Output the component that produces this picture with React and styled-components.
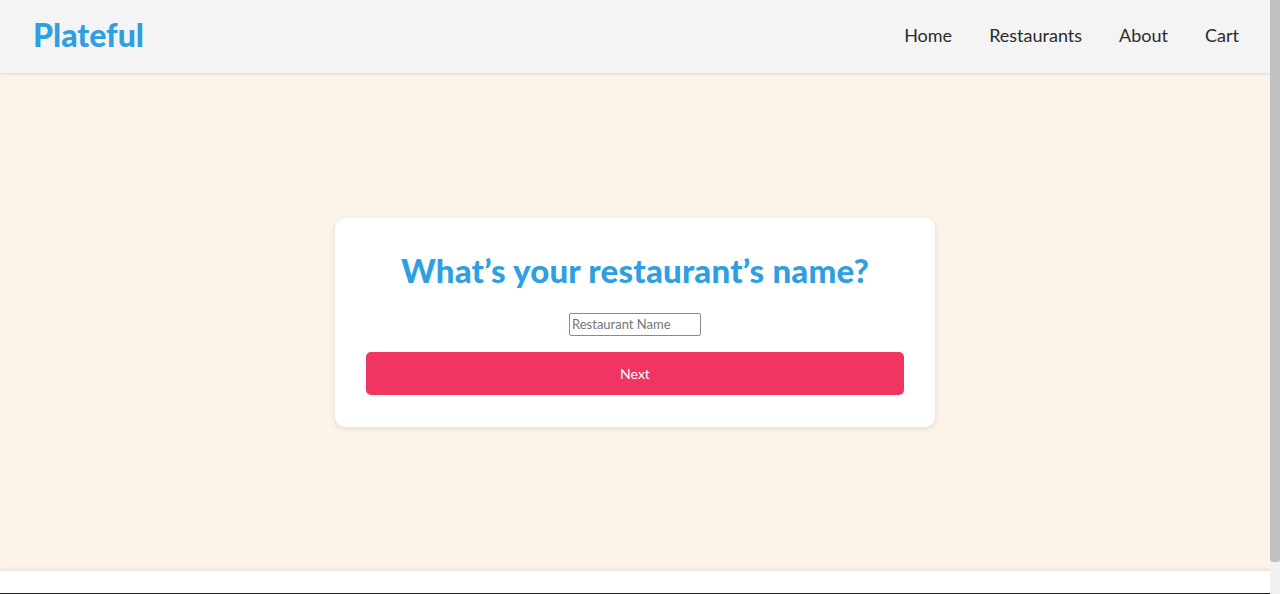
import React, {useState} from 'react'
import styled, {createGlobalStyle} from 'styled-components'

const GlobalStyle = createGlobalStyle`
    html, body {
        margin: 0;
        padding: 0;
        font-family: 'Lato', 'Noto Sans', sans-serif;
        background-color: #ffffff;
    }
`

const Page = styled.div`
    display: flex;
    flex-direction: column;
    min-height: 100vh;
    margin-right: 10px;
`

const ScrollTrack = styled.div`
    position: fixed;
    top: 0;
    right: 0;
    width: 10px;
    height: 100vh;
    background-color: #f1f1f1;
    z-index: 10;
`

const ScrollThumb = styled.div`
    width: 100%;
    border-radius: 0 0 3px 3px;
    background-color: #c1c1c1;
`

const NavBar = styled.nav`
    height: 73px;
    display: flex;
    align-items: center;
    justify-content: space-between;
    padding: 0 31px 0 33px;
    background-color: #f4f4f4;
    box-shadow: 0 1px 3px rgba(0, 0, 0, 0.12);
    position: relative;
    z-index: 2;
`

const Logo = styled.div`
    font-size: 32px;
    font-weight: 900;
    color: #2e9fe2;
    margin-top: -4px;
`

const NavList = styled.ul`
    display: flex;
    gap: 37px;
    margin: 0;
    padding: 0;
    list-style: none;
`

const NavItem = styled.li`
    font-size: 18px;
    color: #2b2b2b;
    margin-top: -4px;
    cursor: pointer;
`

const Main = styled.main`
    height: 498px;
    display: flex;
    align-items: center;
    justify-content: center;
    background-color: #fcf4e8;
`

const Card = styled.div`
    width: 600px;
    box-sizing: border-box;
    padding: 32px 31px;
    display: flex;
    flex-direction: column;
    align-items: center;
    background-color: #ffffff;
    border-radius: 10px;
    box-shadow: 0 2px 6px rgba(0, 0, 0, 0.1);
`

const Title = styled.h1`
    margin: 0 0 22px;
    font-size: 33px;
    line-height: 41px;
    font-weight: 900;
    color: #2e9fe2;
    letter-spacing: 0.2px;
`

const NameInput = styled.input`
    width: 132px;
    height: 23px;
    box-sizing: border-box;
    padding: 1px 2px;
    border: 1px solid #8a8a8a;
    border-radius: 2px;
    font-family: 'Lato', 'Noto Sans', sans-serif;
    font-size: 13px;
    color: #333;
    &::placeholder {
        color: #767676;
    }
`

const NextButton = styled.button`
    width: 100%;
    height: 43px;
    margin-top: 16px;
    border: none;
    border-radius: 5px;
    background-color: #f03562;
    color: #ffffff;
    font-family: 'Lato', 'Noto Sans', sans-serif;
    font-size: 14px;
    cursor: pointer;
`

const Footer = styled.footer`
    padding-top: 22px;
    background-color: #ffffff;
    box-shadow: 0 -2px 4px rgba(0, 0, 0, 0.08);
    position: relative;
`

const FooterBar = styled.div`
    display: flex;
    justify-content: center;
    padding: 14px 0 16px;
    background-color: #222222;
    color: #cccccc;
    font-size: 13px;
`

function App() {
    const [name, setName] = useState('')
    const links = ['Home', 'Restaurants', 'About', 'Cart']

    return (
        <>
            <GlobalStyle />
            <Page>
                <NavBar>
                    <Logo>Plateful</Logo>
                    <NavList>
                        {links.map((l) => <NavItem key={l}>{l}</NavItem>)}
                    </NavList>
                </NavBar>
                <Main>
                    <Card>
                        <Title>What’s your restaurant’s name?</Title>
                        <NameInput
                            placeholder='Restaurant Name'
                            value={name}
                            onChange={(e) => setName(e.target.value)}
                        />
                        <NextButton>Next</NextButton>
                    </Card>
                </Main>
                <Footer>
                    <FooterBar>© 2024 Plateful. All rights reserved.</FooterBar>
                </Footer>
            </Page>
            <ScrollTrack>
                <ScrollThumb style={{height: 562}} />
            </ScrollTrack>
        </>
    )
}

export default App
